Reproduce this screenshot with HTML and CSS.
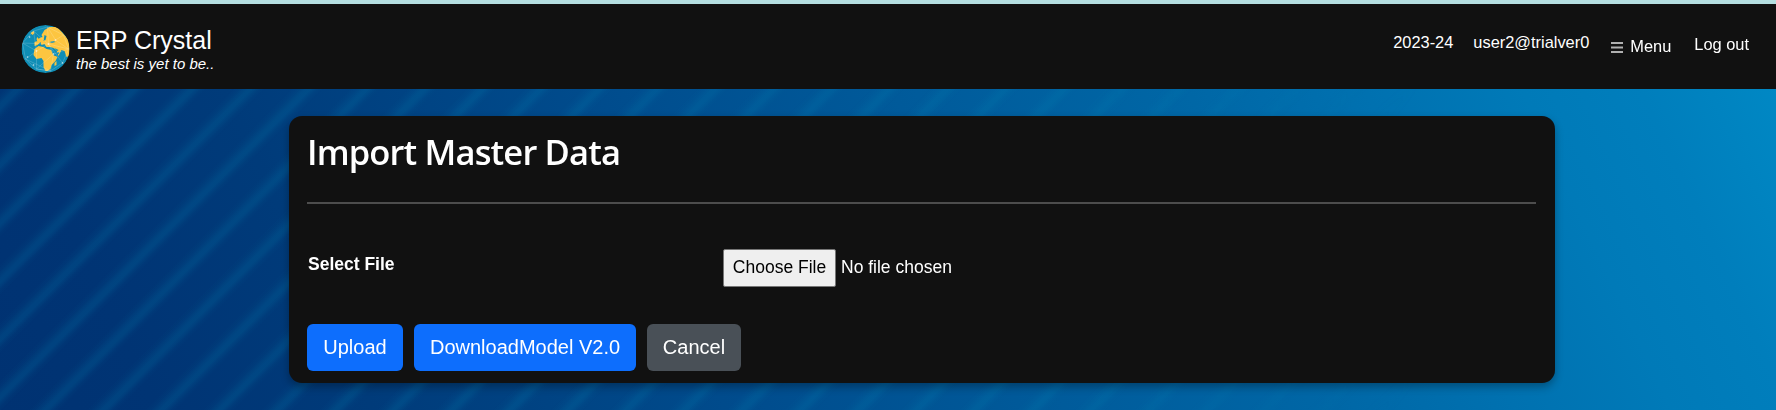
FILE: index.html
```html
<!DOCTYPE html>
<html lang="en">
<head>
<meta charset="utf-8">
<title>Import Master Data</title>
<link rel="stylesheet" href="styles.css">
</head>
<body class="page">
<header class="topbar">
  <a class="brand">
    <svg class="globe" viewBox="0 0 48 48" aria-hidden="true">
      <defs><clipPath id="disc"><circle cx="24" cy="24" r="24"/></clipPath></defs>
      <g clip-path="url(#disc)">
        <circle class="sea" cx="24" cy="24" r="24"/>
        <path class="land" d="M9 8l3-2 1 2-2 2zM20 10l3-5 5-3h8l12 14v15l-3 1-2-6-3-1-3 6-2-6-3-2-3-1h-4l-2-3-3 1-1-3-3 3-3 1v-4l3-1 2-3 3-1zM13 24l4-3 5 1 3 2 5 1 2 5 4 2-2 4-4 4-1 4-3 2h-2l-2-4v-6l-2-3-5 1-3-4zM33 38l2-2v4l-2 1zM16 12l2 3-2 2-1-3z"/>
        <path class="sea" d="M23 10l2 1-1 4-2 1zM28 17l4-1 2 1-4 1zM29 24l4 5 4-2 1 1-4 3-2-1zM33 23l4 2-1 1z"/>
        <path class="mesh" d="M1 18L12 6l14-4 16 8 5 14-6 14-12 8-14-2L4 34 1 18l14 8L12 6l15 13L26 2l8 13 8-5M1 18l26 1 20 5M4 34l11-8 12-7 14 19M15 26v18l14 2 3-17 15-5-13-9-7 4 5 10-17 15M4 34l25 12"/>
        <path class="nodes" d="M8 12h.1M6 32h.1M15 26h.1M12 40h.1M27 19h.1M34 15h.1M32 29h.1M41 38h.1"/>
      </g>
    </svg>
    <span class="brand-text">
      <span class="brand-name">ERP Crystal</span>
      <em class="tagline">the best is yet to be..</em>
    </span>
  </a>
  <nav class="nav">
    <span class="year">2023-24</span>
    <span class="user">user2@trialver0</span>
    <a class="menu"><svg class="bars" viewBox="0 0 12 11" aria-hidden="true"><path d="M0 1h12M0 5.5h12M0 10h12"/></svg>Menu</a>
    <a class="logout">Log out</a>
  </nav>
</header>
<main class="card">
  <h1 class="title">Import Master Data</h1>
  <hr class="rule">
  <div class="field">
    <label class="label">Select File</label>
    <div class="file"><button class="choose" type="button">Choose File</button><span>No file chosen</span></div>
  </div>
  <div class="actions">
    <button class="btn upload" type="button">Upload</button>
    <button class="btn download" type="button">DownloadModel V2.0</button>
    <button class="btn cancel" type="button">Cancel</button>
  </div>
</main>
</body>
</html>
```
FILE: styles.css
```css
* { box-sizing: border-box; }
.page {
  margin: 0;
  height: 410px;
  overflow: hidden;
  font: 16px/24px "Liberation Sans", Arial, sans-serif;
  color: #fff;
  background:
    linear-gradient(65deg, #003272 0%, #003474 8%, #003b7a 19%, #004c8d 38%, #005a9a 53%, #0067a6 68%, #0071b0 77%, #007ab8 85%, #007ebc 91%, #0088c4 98%);
}
.page::before {
  content: "";
  position: fixed;
  inset: 0;
  z-index: -1;
  background: repeating-linear-gradient(135deg, rgba(0,130,178,.05) 0, rgba(0,130,178,0) 4px 22px, rgba(0,130,178,.06) 27px, rgba(0,130,178,.2) 33px 36px, rgba(0,130,178,.05) 41.08px);
  mask-image: linear-gradient(90deg, #000 0 60%, transparent 80%);
}
.topbar {
  display: flex;
  justify-content: space-between;
  height: 89px;
  padding: 21px 27px 0 21px;
  border-top: 4px solid #b5dfe1;
  background: #111;
}
.brand { display: flex; gap: 6px; }
.globe { width: 49px; height: 48px; }
.sea { fill: #0f8db5; }
.land { fill: #fcc540; }
.mesh { fill: none; stroke: #fff; stroke-opacity: .35; stroke-width: .5; }
.nodes { fill: none; stroke: #fff; stroke-opacity: .7; stroke-width: 1.6; stroke-linecap: round; }
.brand-text { display: flex; flex-direction: column; }
.brand-name { font-size: 25px; line-height: 30px; }
.tagline { font-size: 15px; line-height: 18px; }
.nav { display: flex; align-items: flex-start; font-size: 16.4px; }
.year { margin: 5px 20px 0 0; }
.user { margin: 5px 22px 0 0; }
.menu { display: flex; margin: 9px 23px 0 0; }
.bars { width: 12px; height: 11px; margin: 8px 7px 0 0; stroke: #b0b0b0; stroke-width: 2; }
.logout { margin-top: 7px; }
.card {
  width: 1266px;
  height: 267px;
  margin: 27px 0 0 289px;
  padding: 12px 19px 12px 18px;
  border-radius: 13px;
  background: #111;
  box-shadow: 0 4px 8px rgba(0,0,0,.3);
}
.title { margin: 0; font: 600 34.5px/48px "Open Sans", sans-serif; letter-spacing: -.85px; height: 50px; }
.rule { height: 2px; margin: 24px 0 45px; border: 0; background: #4d4d4d; }
.field { display: grid; grid-template-columns: 416px 1fr; height: 38px; }
.label { font-size: 17.5px; font-weight: bold; padding: 3px 0 0 1px; }
.file { display: flex; gap: 5px; font-size: 17.5px; line-height: 36px; }
.choose { width: 113px; height: 38px; padding: 0 0 2px; border: 1px solid #767676; border-radius: 2px; background: #efefef; color: #000; font: inherit; line-height: 34px; }
.actions { display: flex; gap: 11px; margin-top: 37px; }
.btn { height: 47px; padding: 0; border: 0; border-radius: 6px; color: #fff; font: 20px/47px "Liberation Sans", Arial, sans-serif; }
.upload { width: 96px; background: #0d6efd; }
.download { width: 222px; background: #0d6efd; }
.cancel { width: 94px; background: #495057; }
```
